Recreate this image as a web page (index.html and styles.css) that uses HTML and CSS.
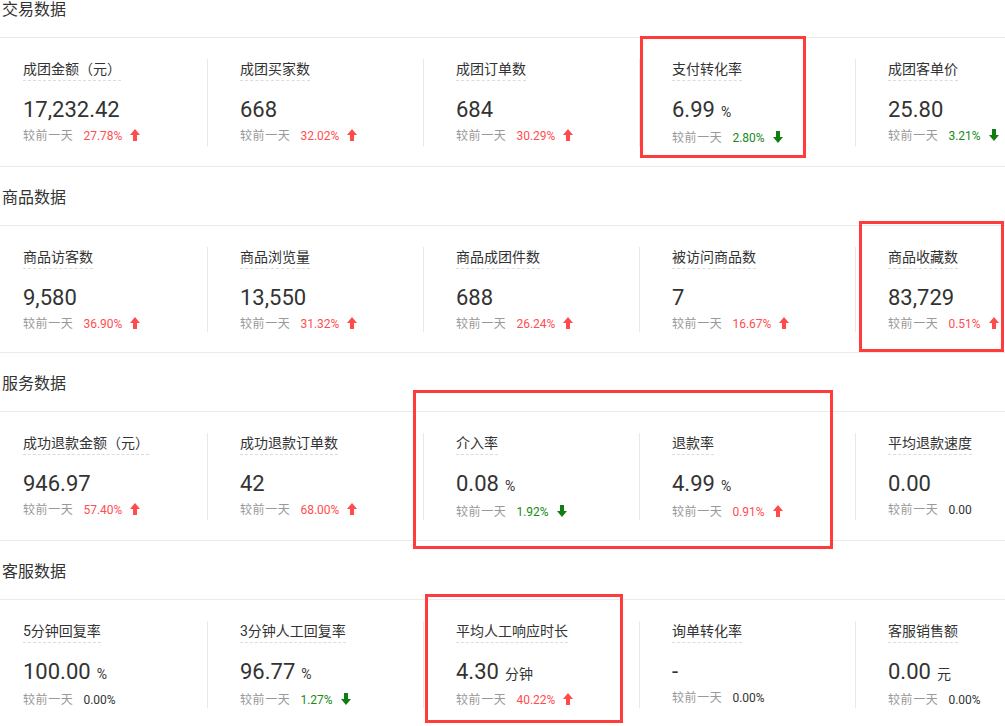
FILE: index.html
```html
<!DOCTYPE html>
<html lang="zh-CN">
<head>
  <meta charset="UTF-8"/>
  <title>数据概览</title>
  <meta name="viewport" content="width=device-width,initial-scale=1"/>
  <link rel="stylesheet" href="styles.css">
</head>
<body>
<div class="page">

  <section class="block">
    <h3 class="block-title">交易数据</h3>
    <div class="cards">
      <div class="card">
        <div class="label"><span>成团金额（元）</span></div>
        <div class="value">17,232.42</div>
        <div class="compare"><span class="day">较前一天</span><span class="rate up">27.78%</span><svg class="arrow up" viewBox="0 0 10 12"><path d="M5 0L10 6H7V12H3V6H0Z"/></svg></div>
      </div>
      <div class="card">
        <div class="label"><span>成团买家数</span></div>
        <div class="value">668</div>
        <div class="compare"><span class="day">较前一天</span><span class="rate up">32.02%</span><svg class="arrow up" viewBox="0 0 10 12"><path d="M5 0L10 6H7V12H3V6H0Z"/></svg></div>
      </div>
      <div class="card">
        <div class="label"><span>成团订单数</span></div>
        <div class="value">684</div>
        <div class="compare"><span class="day">较前一天</span><span class="rate up">30.29%</span><svg class="arrow up" viewBox="0 0 10 12"><path d="M5 0L10 6H7V12H3V6H0Z"/></svg></div>
      </div>
      <div class="card">
        <div class="label"><span>支付转化率</span></div>
        <div class="value">6.99<span class="unit">%</span></div>
        <div class="compare"><span class="day">较前一天</span><span class="rate down">2.80%</span><svg class="arrow down" viewBox="0 0 10 12"><path d="M3 0H7V6H10L5 12L0 6H3Z"/></svg></div>
      </div>
      <div class="card">
        <div class="label"><span>成团客单价</span></div>
        <div class="value">25.80</div>
        <div class="compare"><span class="day">较前一天</span><span class="rate down">3.21%</span><svg class="arrow down" viewBox="0 0 10 12"><path d="M3 0H7V6H10L5 12L0 6H3Z"/></svg></div>
      </div>
    </div>
  </section>

  <section class="block">
    <h3 class="block-title">商品数据</h3>
    <div class="cards">
      <div class="card">
        <div class="label"><span>商品访客数</span></div>
        <div class="value">9,580</div>
        <div class="compare"><span class="day">较前一天</span><span class="rate up">36.90%</span><svg class="arrow up" viewBox="0 0 10 12"><path d="M5 0L10 6H7V12H3V6H0Z"/></svg></div>
      </div>
      <div class="card">
        <div class="label"><span>商品浏览量</span></div>
        <div class="value">13,550</div>
        <div class="compare"><span class="day">较前一天</span><span class="rate up">31.32%</span><svg class="arrow up" viewBox="0 0 10 12"><path d="M5 0L10 6H7V12H3V6H0Z"/></svg></div>
      </div>
      <div class="card">
        <div class="label"><span>商品成团件数</span></div>
        <div class="value">688</div>
        <div class="compare"><span class="day">较前一天</span><span class="rate up">26.24%</span><svg class="arrow up" viewBox="0 0 10 12"><path d="M5 0L10 6H7V12H3V6H0Z"/></svg></div>
      </div>
      <div class="card">
        <div class="label"><span>被访问商品数</span></div>
        <div class="value">7</div>
        <div class="compare"><span class="day">较前一天</span><span class="rate up">16.67%</span><svg class="arrow up" viewBox="0 0 10 12"><path d="M5 0L10 6H7V12H3V6H0Z"/></svg></div>
      </div>
      <div class="card">
        <div class="label"><span>商品收藏数</span></div>
        <div class="value">83,729</div>
        <div class="compare"><span class="day">较前一天</span><span class="rate up">0.51%</span><svg class="arrow up" viewBox="0 0 10 12"><path d="M5 0L10 6H7V12H3V6H0Z"/></svg></div>
      </div>
    </div>
  </section>

  <section class="block">
    <h3 class="block-title">服务数据</h3>
    <div class="cards">
      <div class="card">
        <div class="label"><span>成功退款金额（元）</span></div>
        <div class="value">946.97</div>
        <div class="compare"><span class="day">较前一天</span><span class="rate up">57.40%</span><svg class="arrow up" viewBox="0 0 10 12"><path d="M5 0L10 6H7V12H3V6H0Z"/></svg></div>
      </div>
      <div class="card">
        <div class="label"><span>成功退款订单数</span></div>
        <div class="value">42</div>
        <div class="compare"><span class="day">较前一天</span><span class="rate up">68.00%</span><svg class="arrow up" viewBox="0 0 10 12"><path d="M5 0L10 6H7V12H3V6H0Z"/></svg></div>
      </div>
      <div class="card">
        <div class="label"><span>介入率</span></div>
        <div class="value">0.08<span class="unit">%</span></div>
        <div class="compare"><span class="day">较前一天</span><span class="rate down">1.92%</span><svg class="arrow down" viewBox="0 0 10 12"><path d="M3 0H7V6H10L5 12L0 6H3Z"/></svg></div>
      </div>
      <div class="card">
        <div class="label"><span>退款率</span></div>
        <div class="value">4.99<span class="unit">%</span></div>
        <div class="compare"><span class="day">较前一天</span><span class="rate up">0.91%</span><svg class="arrow up" viewBox="0 0 10 12"><path d="M5 0L10 6H7V12H3V6H0Z"/></svg></div>
      </div>
      <div class="card">
        <div class="label"><span>平均退款速度</span></div>
        <div class="value">0.00</div>
        <div class="compare"><span class="day">较前一天</span><span class="rate">0.00</span></div>
      </div>
    </div>
  </section>

  <section class="block">
    <h3 class="block-title">客服数据</h3>
    <div class="cards">
      <div class="card">
        <div class="label"><span>5分钟回复率</span></div>
        <div class="value">100.00<span class="unit">%</span></div>
        <div class="compare"><span class="day">较前一天</span><span class="rate">0.00%</span></div>
      </div>
      <div class="card">
        <div class="label"><span>3分钟人工回复率</span></div>
        <div class="value">96.77<span class="unit">%</span></div>
        <div class="compare"><span class="day">较前一天</span><span class="rate down">1.27%</span><svg class="arrow down" viewBox="0 0 10 12"><path d="M3 0H7V6H10L5 12L0 6H3Z"/></svg></div>
      </div>
      <div class="card">
        <div class="label"><span>平均人工响应时长</span></div>
        <div class="value">4.30<span class="unit">分钟</span></div>
        <div class="compare"><span class="day">较前一天</span><span class="rate up">40.22%</span><svg class="arrow up" viewBox="0 0 10 12"><path d="M5 0L10 6H7V12H3V6H0Z"/></svg></div>
      </div>
      <div class="card">
        <div class="label"><span>询单转化率</span></div>
        <div class="value">-</div>
        <div class="compare"><span class="day">较前一天</span><span class="rate">0.00%</span></div>
      </div>
      <div class="card">
        <div class="label"><span>客服销售额</span></div>
        <div class="value">0.00<span class="unit">元</span></div>
        <div class="compare"><span class="day">较前一天</span><span class="rate">0.00%</span></div>
      </div>
    </div>
  </section>

  <!-- highlight marks drawn over the screenshot -->
  <div class="mark mark-1"></div>
  <div class="mark mark-2"></div>
  <div class="mark mark-3"></div>
  <div class="mark mark-4"></div>
</div>
</body>
</html>
```

FILE: styles.css
```css
html,body{margin:0;padding:0;background:#fff;}
body{overflow:hidden;font-family:Roboto,"Noto Sans CJK SC",sans-serif;color:#333;}
.page{position:relative;width:1005px;height:726px;overflow:hidden;}

.block{margin-top:21px;}
.block:first-child{margin-top:0;}
.block-title{margin:0 0 17px;padding-left:2px;font-size:16px;line-height:20px;font-weight:normal;color:#333;}

.cards{display:grid;grid-template-columns:207px repeat(4,216px);padding:21px 0 20px;border-top:1px solid #ebebeb;border-bottom:1px solid #ebebeb;width:1071px;}
.card{padding-left:32px;border-left:1px solid #e8e8e8;white-space:nowrap;}
.card:first-child{padding-left:23px;border-left:none;}

.label span{display:inline-block;font-size:14px;line-height:20px;padding-bottom:1px;border-bottom:1px dashed #dcdcdc;}
.value{margin-top:14px;font-size:22px;line-height:30px;color:#333;}
.unit{margin-left:6px;font-size:14px;}
.compare{margin-top:3px;font-size:12px;line-height:16px;color:#999;}
.day{letter-spacing:.6px;}
.rate{margin-left:10px;color:#333;}
.rate.up{color:#ff4d51;}
.rate.down{color:#178a17;}
.arrow{width:10px;height:12px;margin-left:8px;vertical-align:-1px;}
.arrow.up{fill:#ff4b4b;}
.arrow.down{fill:#117d11;}

.mark{position:absolute;border:3px solid #ff3b3b;box-sizing:border-box;}
.mark-1{left:640px;top:36px;width:166px;height:122px;}
.mark-2{left:859px;top:221px;width:145px;height:131px;}
.mark-3{left:413px;top:390px;width:420px;height:159px;}
.mark-4{left:425px;top:594px;width:198px;height:129px;}
```
